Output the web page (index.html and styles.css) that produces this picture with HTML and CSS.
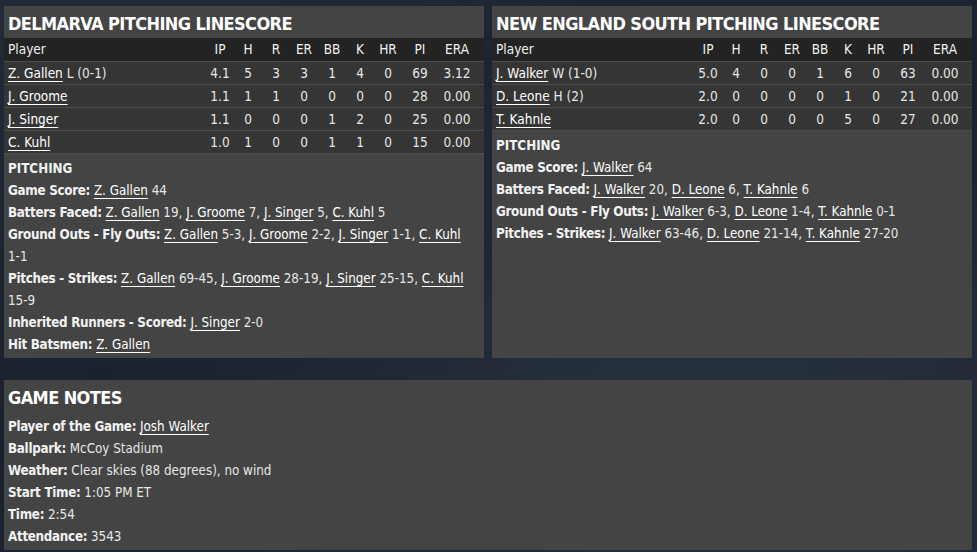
FILE: index.html
```html
<!DOCTYPE html>
<html lang="en">
<head>
  <meta charset="UTF-8" />
  <title>Box Score - Pitching</title>
  <link rel="stylesheet" href="styles.css">
</head>
<body>
  <main class="page">
    <div class="linescores">
      <section class="panel">
        <h2 class="panel-title">DELMARVA PITCHING LINESCORE</h2>
        <table class="linescore">
          <colgroup>
            <col class="col-player">
            <col class="col-stat"><col class="col-stat"><col class="col-stat"><col class="col-stat">
            <col class="col-stat"><col class="col-stat"><col class="col-stat">
            <col class="col-pi"><col class="col-era">
          </colgroup>
          <thead>
            <tr><th class="player">Player</th><th>IP</th><th>H</th><th>R</th><th>ER</th><th>BB</th><th>K</th><th>HR</th><th>PI</th><th>ERA</th></tr>
          </thead>
          <tbody>
            <tr><td class="player"><a href="#">Z. Gallen</a> L (0-1)</td><td>4.1</td><td>5</td><td>3</td><td>3</td><td>1</td><td>4</td><td>0</td><td>69</td><td>3.12</td></tr>
            <tr><td class="player"><a href="#">J. Groome</a></td><td>1.1</td><td>1</td><td>1</td><td>0</td><td>0</td><td>0</td><td>0</td><td>28</td><td>0.00</td></tr>
            <tr><td class="player"><a href="#">J. Singer</a></td><td>1.1</td><td>0</td><td>0</td><td>0</td><td>1</td><td>2</td><td>0</td><td>25</td><td>0.00</td></tr>
            <tr><td class="player"><a href="#">C. Kuhl</a></td><td>1.0</td><td>1</td><td>0</td><td>0</td><td>1</td><td>1</td><td>0</td><td>15</td><td>0.00</td></tr>
          </tbody>
        </table>
        <div class="details">
          <h3 class="details-head">PITCHING</h3>
          <p><b>Game Score:</b> <a href="#">Z. Gallen</a> 44</p>
          <p><b>Batters Faced:</b> <a href="#">Z. Gallen</a> 19, <a href="#">J. Groome</a> 7, <a href="#">J. Singer</a> 5, <a href="#">C. Kuhl</a> 5</p>
          <p><b>Ground Outs - Fly Outs:</b> <a href="#">Z. Gallen</a> <span class="nb">5-3,</span> <a href="#">J. Groome</a> <span class="nb">2-2,</span> <a href="#">J. Singer</a> <span class="nb">1-1,</span> <a href="#">C. Kuhl</a> <span class="nb">1-1</span></p>
          <p><b>Pitches - Strikes:</b> <a href="#">Z. Gallen</a> <span class="nb">69-45,</span> <a href="#">J. Groome</a> <span class="nb">28-19,</span> <a href="#">J. Singer</a> <span class="nb">25-15,</span> <a href="#">C. Kuhl</a> <span class="nb">15-9</span></p>
          <p><b>Inherited Runners - Scored:</b> <a href="#">J. Singer</a> <span class="nb">2-0</span></p>
          <p><b>Hit Batsmen:</b> <a href="#">Z. Gallen</a></p>
        </div>
      </section>

      <section class="panel">
        <h2 class="panel-title">NEW ENGLAND SOUTH PITCHING LINESCORE</h2>
        <table class="linescore">
          <colgroup>
            <col class="col-player">
            <col class="col-stat"><col class="col-stat"><col class="col-stat"><col class="col-stat">
            <col class="col-stat"><col class="col-stat"><col class="col-stat">
            <col class="col-pi"><col class="col-era">
          </colgroup>
          <thead>
            <tr><th class="player">Player</th><th>IP</th><th>H</th><th>R</th><th>ER</th><th>BB</th><th>K</th><th>HR</th><th>PI</th><th>ERA</th></tr>
          </thead>
          <tbody>
            <tr><td class="player"><a href="#">J. Walker</a> W (1-0)</td><td>5.0</td><td>4</td><td>0</td><td>0</td><td>1</td><td>6</td><td>0</td><td>63</td><td>0.00</td></tr>
            <tr><td class="player"><a href="#">D. Leone</a> H (2)</td><td>2.0</td><td>0</td><td>0</td><td>0</td><td>0</td><td>1</td><td>0</td><td>21</td><td>0.00</td></tr>
            <tr><td class="player"><a href="#">T. Kahnle</a></td><td>2.0</td><td>0</td><td>0</td><td>0</td><td>0</td><td>5</td><td>0</td><td>27</td><td>0.00</td></tr>
          </tbody>
        </table>
        <div class="details">
          <h3 class="details-head">PITCHING</h3>
          <p><b>Game Score:</b> <a href="#">J. Walker</a> 64</p>
          <p><b>Batters Faced:</b> <a href="#">J. Walker</a> 20, <a href="#">D. Leone</a> 6, <a href="#">T. Kahnle</a> 6</p>
          <p><b>Ground Outs - Fly Outs:</b> <a href="#">J. Walker</a> 6-3, <a href="#">D. Leone</a> 1-4, <a href="#">T. Kahnle</a> 0-1</p>
          <p><b>Pitches - Strikes:</b> <a href="#">J. Walker</a> 63-46, <a href="#">D. Leone</a> 21-14, <a href="#">T. Kahnle</a> 27-20</p>
        </div>
      </section>
    </div>

    <section class="panel game-notes">
      <h2 class="panel-title">GAME NOTES</h2>
      <div class="details">
        <p><b>Player of the Game:</b> <a href="#">Josh Walker</a></p>
        <p><b>Ballpark:</b> McCoy Stadium</p>
        <p><b>Weather:</b> Clear skies (88 degrees), no wind</p>
        <p><b>Start Time:</b> 1:05 PM ET</p>
        <p><b>Time:</b> 2:54</p>
        <p><b>Attendance:</b> 3543</p>
      </div>
    </section>
  </main>
</body>
</html>
```

FILE: styles.css
```css
/* Reset and base */
*, *::before, *::after {
  box-sizing: border-box;
}
html, body {
  margin: 0;
  padding: 0;
  height: 100%;
}
body {
  background-color: #1d232f;
  background-image:
    radial-gradient(ellipse at 70% 70%, rgba(60, 70, 90, 0.35), transparent 60%),
    linear-gradient(160deg, #222a38 0%, #1b212c 50%, #202735 100%);
  color: #e6e6e6;
  font-family: "DejaVu Sans Condensed", "Liberation Sans Narrow", "Roboto", sans-serif;
  font-size: 13px;
  overflow: hidden;
}

/* Page layout */
.page {
  padding: 6px 5px 0 4px;
  display: flex;
  flex-direction: column;
  gap: 22px;
}
.linescores {
  display: grid;
  grid-template-columns: 480px 480px;
  gap: 8px;
}

/* Panels */
.panel {
  background: #444444;
  display: flex;
  flex-direction: column;
}
.panel-title {
  margin: 0;
  padding: 2px 4px 0;
  height: 32px;
  line-height: 32px;
  font-size: 18px;
  font-weight: 700;
  color: #ffffff;
  letter-spacing: -0.6px;
  white-space: nowrap;
}

/* Linescore table */
.linescore {
  width: 100%;
  border-collapse: collapse;
  table-layout: fixed;
  font-size: 13.5px;
}
.col-player { width: 202px; }
.col-stat { width: 28px; }
.col-pi { width: 36px; }
.col-era { width: 46px; }
.linescore th,
.linescore td {
  padding: 0;
  height: 23px;
  text-align: center;
  font-weight: 400;
  white-space: nowrap;
}
.linescore th.player,
.linescore td.player {
  text-align: left;
  padding-left: 4px;
}
.linescore td:last-child,
.linescore th:last-child {
  padding-right: 8px;
}
.linescore thead tr {
  background: #232323;
  color: #f0f0f0;
}
.linescore tbody tr {
  background: #353535;
  border-top: 1px solid #4c4c4c;
}
.linescore tbody tr:last-child {
  border-bottom: 1px solid #4c4c4c;
}

a {
  color: #ffffff;
  text-decoration: underline;
  text-underline-offset: 3px;
}

/* Pitching notes */
.details {
  padding: 4px 10px 2px 4px;
  font-size: 13.3px;
}
.details-head {
  margin: 0;
  font-size: 13.3px;
  line-height: 22px;
  font-weight: 700;
  color: #f2f2f2;
}
.details p {
  margin: 0;
  line-height: 22px;
}
.details b {
  color: #f2f2f2;
  letter-spacing: -0.3px;
}
.nb {
  white-space: nowrap;
}

/* Game notes */
.game-notes {
  width: 968px;
  height: 170px;
}
```
